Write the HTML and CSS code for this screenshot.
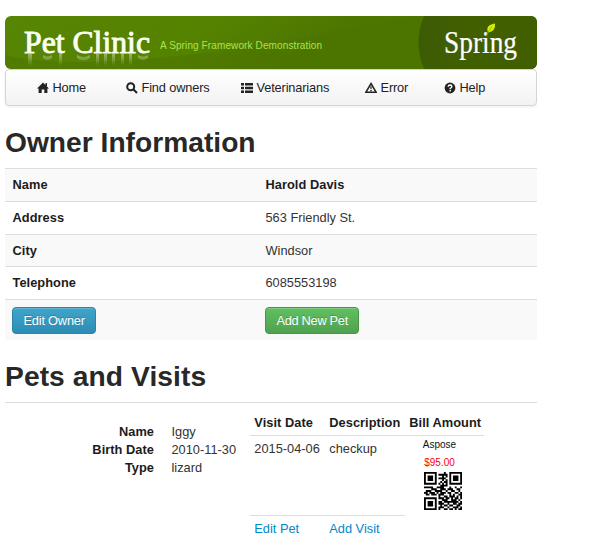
FILE: index.html
```
<!DOCTYPE html>
<html lang="en">
<head>
<meta charset="utf-8">
<title>PetClinic</title>
<link rel="stylesheet" href="styles.css">
</head>
<body>
<header class="banner">
<svg width="532" height="53" viewBox="0 0 532 53">
  <defs>
    <linearGradient id="green" x1="0" x2="1" y1="0" y2=".15"><stop offset="0" stop-color="#578504"/><stop offset=".4" stop-color="#558300"/><stop offset=".65" stop-color="#4d7600"/><stop offset="1" stop-color="#4d7600"/></linearGradient>
    <linearGradient id="dark" x1="0" x2="1"><stop offset="0" stop-color="#3c5b05"/><stop offset=".4" stop-color="#425f00"/></linearGradient>
    <linearGradient id="fade" x1="0" x2="0" y1="0" y2="1"><stop offset="0" stop-color="#fff" stop-opacity=".38"/><stop offset="1" stop-color="#fff" stop-opacity="0"/></linearGradient>
    <filter id="soft"><feGaussianBlur stdDeviation=".5"/></filter>
  </defs>
  <rect width="532" height="53" fill="url(#green)"/>
  <path d="M0 39Q45 50 125 44T250 30L415 0V53H0Z" fill="#4b7300" opacity=".5"/>
  <path d="M419 0Q408 26 419 53H532V0Z" fill="url(#dark)"/>
  <path d="M23 38h4v12h-4zM38 39q4 3 9 0v3q-5 4-9 0zM54 38h3v11h-3zM72 39q7 4 13 0v3q-7 5-13 0zM91 38h3v12h-3zM99 38h3v12h-3zM107 38h3v11h-3zM116 38h3v11h-3zM124 38h3v12h-3zM133 39q5 3 10 0v3q-5 4-10 0z" fill="url(#fade)" filter="url(#soft)"/>
  <text class="brand" x="19" y="37" textLength="126" lengthAdjust="spacingAndGlyphs">Pet Clinic</text>
  <text class="tagline" x="155" y="33" textLength="162">A Spring Framework Demonstration</text>
  <text class="spring" x="439" y="37" textLength="73" lengthAdjust="spacingAndGlyphs">Spring</text>
  <path d="M483 16.5Q480 9 490 7.5Q491 15 483 16.5Z" fill="#d5ee00"/>
  <path d="M481 19L487 10.500" stroke="#7da800" stroke-width=".7"/>
</svg>
</header>
<nav class="nav">
  <a class="home"><svg viewBox="0 0 12 12"><path d="M6 .5L12 6.5H10.4V11H7.3V7.5H4.7V11H1.6V6.5H0L6 .5ZM8.5 1H10V4H8.5Z"/></svg>Home</a>
  <a class="find"><svg viewBox="0 0 12 12"><circle class="line" cx="4.7" cy="4.7" r="3.5"/><path class="line" d="M7.3 7.3L11 11"/></svg>Find owners</a>
  <a class="vets"><svg viewBox="0 0 12 12"><path d="M0 1H3V3.6H0ZM4 1H12V3.6H4ZM0 4.8H3V7.3H0ZM4 4.8H12V7.3H4ZM0 8.500H3V11H0ZM4 8.500H12V11H4Z"/></svg>Veterinarians</a>
  <a class="error"><svg viewBox="0 0 12 12"><path class="thin" d="M6 1.500L11.200 10.300H.8Z"/><path d="M5.200 4.400H6.800L6.500 7.300H5.500ZM5.300 8H6.700V9.300H5.300Z"/></svg>Error</a>
  <a class="help"><svg viewBox="0 0 12 12"><circle cx="6" cy="6" r="5.4"/><path class="mark" d="M4.100 4.800Q4.200 3 6.100 3Q8 3.100 7.800 4.800Q7.600 5.600 6.200 6.300V7.200M6.200 8.100V9.600"/></svg>Help</a>
</nav>
<h1 class="owner-title">Owner Information</h1>
<table class="owner">
  <tr><th>Name</th><td><b>Harold Davis</b></td></tr>
  <tr><th>Address</th><td>563 Friendly St.</td></tr>
  <tr><th>City</th><td>Windsor</td></tr>
  <tr><th>Telephone</th><td>6085553198</td></tr>
  <tr class="actions"><td><a class="btn info">Edit Owner</a></td><td><a class="btn success">Add New Pet</a></td></tr>
</table>
<h1 class="pets-title">Pets and Visits</h1>
<section class="pets">
  <dl class="pet">
    <dt>Name</dt><dd>Iggy</dd>
    <dt>Birth Date</dt><dd>2010-11-30</dd>
    <dt>Type</dt><dd>lizard</dd>
  </dl>
  <div class="visits">
    <b class="head">Visit Date</b><b class="head">Description</b><b class="head">Bill Amount</b>
    <span class="cell">2015-04-06</span><span class="cell">checkup</span>
    <div class="bill"><span>Aspose</span><span class="price">$95.00</span><svg id="qr" viewBox="0 0 21 21"></svg></div>
    <a class="cell link">Edit Pet</a><a class="cell link">Add Visit</a>
  </div>
</section>
<script src="qr.js"></script>
</body>
</html>
```
FILE: styles.css
```
body { margin: 0; padding: 16px 0 0 5px; width: 532px; background: #fff; color: #333; font: 12.8px/18px "Liberation Sans", Arial, sans-serif; }
b, th, dt { font-weight: bold; color: #1c1c1c; letter-spacing: .05px; }
.banner { height: 53px; border-radius: 6px; overflow: hidden; }
.banner svg { display: block; }
.brand { font: 31px "Liberation Serif", serif; fill: #fbfff0; stroke: #fbfff0; stroke-width: .9px; }
.tagline { font: 10px "Liberation Sans", sans-serif; fill: #abe34f; }
.spring { font: 32px "Liberation Serif", serif; fill: #fff; stroke: #fff; stroke-width: .2px; }
.nav { box-sizing: border-box; height: 37px; display: flex; padding-left: 31px; border: 1px solid #d4d4d4; border-radius: 4px; background: linear-gradient(#fff, #f2f2f2); box-shadow: 0 1px 3px rgba(0,0,0,.07); line-height: 36px; color: #222; letter-spacing: -.15px; }
.nav a { display: flex; align-items: center; gap: 3.5px; white-space: nowrap; }
.nav svg { width: 12px; height: 12px; fill: #222; }
.nav .line { fill: none; stroke: #222; stroke-width: 2; }
.nav .thin { fill: none; stroke: #222; stroke-width: 1.5; }
.nav .mark { fill: none; stroke: #fff; stroke-width: 1.4; }
.home { width: 89px; }
.find { width: 115px; }
.vets { width: 124px; }
.error { width: 79px; }
h1 { margin: 0; font-size: 28.2px; line-height: 36px; color: #282828; }
.owner-title { padding-top: 18px; height: 44px; }
.owner { width: 532px; border-collapse: collapse; table-layout: fixed; }
.owner th, .owner td { height: 18px; padding: 7px 7px 6.8px 7.5px; border-top: 1px solid #ddd; text-align: left; vertical-align: top; }
.owner th, .owner td:first-child { width: 238.5px; }
.owner tr:nth-child(odd) { background: #f9f9f9; }
.owner .actions td { height: 27px; padding: 7px 7px 6px; }
.btn { display: inline-block; box-sizing: border-box; height: 27px; padding: 0 10.5px; border: 1px solid; border-radius: 4px; color: #fff; line-height: 25px; letter-spacing: -.2px; text-shadow: 0 -1px rgba(0,0,0,.2); box-shadow: inset 0 1px rgba(255,255,255,.2); }
.success { letter-spacing: -.3px; }
.info { background: linear-gradient(#40a5cb, #2c8db3); border-color: #2b83a6; }
.success { background: linear-gradient(#60c060, #50a250); border-color: #459645; }
.pets-title { padding-top: 18px; height: 44px; border-bottom: 1px solid #ddd; letter-spacing: .08px; }
.pets { display: flex; }
.pet { margin: 20px 0 0; width: 245px; display: grid; grid-template-columns: 149px 78px; column-gap: 17.5px; align-content: start; }
.pet dt { text-align: right; }
.pet dd { margin: 0; }
.visits { width: 234px; padding-top: 7px; display: grid; grid-template-columns: 75px 80px 79px; grid-template-rows: 25px 80px 27px; white-space: nowrap; }
.head, .cell { padding: 4px 0 0 4.3px; }
.cell { border-top: 1px solid #ddd; }
.bill { border-top: 1px solid #ddd; display: flex; flex-direction: column; align-items: center; padding-right: 10px; font-size: 10px; line-height: 18px; color: #111; }
.price { color: #f00; }
.bill svg { width: 38px; height: 38px; margin-left: 6px; flex: none; }
.link { color: #08c; }
```
FILE: qr.js
```
const rows = [
  "111111100001001111111",
  "100000101111101000001",
  "101110100010101011101",
  "101110101111001011101",
  "101110100010101011101",
  "100000100101101000001",
  "111111101010101111111",
  "000000000111100000000",
  "111110011110001001001",
  "000011100111011100110",
  "011100111100100110010",
  "110111010111011001101",
  "011011101110001010011",
  "000000001001101110101",
  "111111101110110101101",
  "100000100011100111010",
  "101110101101111111101",
  "101110101110010011011",
  "101110100101101100110",
  "100000101110010011101",
  "111111101001101101011"
];
const path = document.createElementNS("http://www.w3.org/2000/svg", "path");
let d = "";
rows.forEach((row, y) => [...row].forEach((bit, x) => {
  if (bit === "1") d += `M${x} ${y}h1.03v1.03h-1.03z`;
}));
path.setAttribute("d", d);
document.getElementById("qr").append(path);
```
